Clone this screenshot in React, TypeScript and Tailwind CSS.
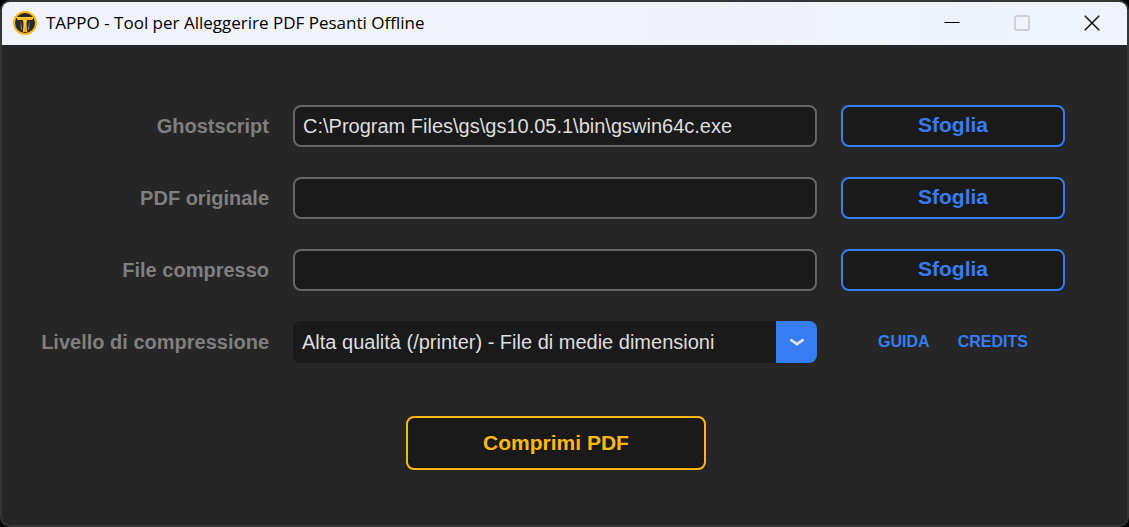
import { useState } from "react";
import type { ReactNode } from "react";

function AppIcon() {
  return (
    <svg viewBox="0 0 24 24" className="size-6 shrink-0" aria-hidden="true">
      <defs>
        <linearGradient id="gold" x1="0" y1="0" x2="0" y2="1">
          <stop offset="0" stopColor="#ffd04a" />
          <stop offset="1" stopColor="#f9ae14" />
        </linearGradient>
        <linearGradient id="steel" x1="0" y1="0" x2="0" y2="1">
          <stop offset="0" stopColor="#454545" />
          <stop offset="1" stopColor="#b4b4b4" />
        </linearGradient>
      </defs>
      <circle cx="12" cy="12" r="11" fill="#282828" stroke="#fdb515" strokeWidth="2" />
      <path d="M4 6h16v2l-1 1H5L4 8z" fill="url(#gold)" />
      <path d="M10 9h4l-.5 4 .7 8H9.800l.7-8z" fill="url(#gold)" />
      <path d="M7 10.500h1.300l.7 8.500H8.200z" fill="url(#steel)" />
      <path d="M15.700 10.500H17l-1.200 8.500H15z" fill="url(#steel)" />
    </svg>
  );
}

function TitleBar() {
  return (
    <header className="flex h-[43px] items-center bg-linear-to-r from-[#f0f3fc] via-[#f0f3f7] to-[#eef3fd] pb-px pl-[11px]">
      <AppIcon />
      <h1 className="ml-[9px] flex-1 pb-px font-['Open_Sans','Noto_Sans',sans-serif] text-[17px] leading-6 whitespace-nowrap text-black">
        TAPPO - Tool per Alleggerire PDF Pesanti Offline
      </h1>
      <div className="flex h-full">
        <button type="button" aria-label="Riduci a icona" className="flex w-[70px] items-center justify-center">
          <svg viewBox="0 0 16 16" className="size-4" stroke="#000" fill="none">
            <path d="M0.500 7.500h15" />
          </svg>
        </button>
        <button type="button" aria-label="Ingrandisci" disabled className="flex w-[70px] items-center justify-center">
          <svg viewBox="0 0 16 16" className="size-4" stroke="#c3c4c7" fill="none">
            <rect x="1" y="1" width="14" height="14" rx="1.500" strokeWidth="1.400" />
          </svg>
        </button>
        <button type="button" aria-label="Chiudi" className="flex w-[70px] items-center justify-center">
          <svg viewBox="0 0 16 16" className="size-4" stroke="#111" strokeWidth="1.500" fill="none">
            <path d="M0.800 0.800l14.400 14.400M15.200 0.800L0.800 15.200" />
          </svg>
        </button>
      </div>
    </header>
  );
}

function Label({ htmlFor, children }: { htmlFor: string; children: ReactNode }) {
  return (
    <label htmlFor={htmlFor} className="flex items-center justify-end text-xl font-bold whitespace-nowrap text-[#7f7f7f]">
      {children}
    </label>
  );
}

function FileRow({ id, label, initial = "" }: { id: string; label: string; initial?: string }) {
  const [value, setValue] = useState(initial);
  return (
    <>
      <Label htmlFor={id}>{label}</Label>
      <input
        id={id}
        type="text"
        value={value}
        onChange={(e) => setValue(e.target.value)}
        className="h-[42px] w-full min-w-0 rounded-lg border-2 border-[#656565] bg-[#1a1a1a] px-2 text-xl text-[#dedede] outline-none"
      />
      <button
        type="button"
        className="h-[42px] rounded-lg border-2 border-[#367cf2] bg-[#1a1a1a] pb-[2px] text-[21px] leading-6 font-bold text-[#367cf2]"
      >
        Sfoglia
      </button>
    </>
  );
}

const levels = [
  "Alta qualità (/printer) - File di medie dimensioni",
  "Qualità media (/ebook) - File di piccole dimensioni",
  "Qualità bassa (/screen) - File molto piccolo",
];

export default function App() {
  return (
    <div className="min-h-screen bg-black font-['Liberation_Sans',Arial,sans-serif]">
      <div className="flex min-h-screen flex-col overflow-hidden rounded-[10px] border-2 border-[#353535] bg-[#262626]">
        <TitleBar />
        <main className="flex-1 pt-[60px] pr-[62px] pb-[50px] pl-[45px]">
          <form onSubmit={(e) => e.preventDefault()}>
            <div className="grid grid-cols-[222px_1fr_224px] gap-x-6 gap-y-[30px]">
              <FileRow id="ghostscript" label="Ghostscript" initial="C:\Program Files\gs\gs10.05.1\bin\gswin64c.exe" />
              <FileRow id="originale" label="PDF originale" />
              <FileRow id="compresso" label="File compresso" />
              <Label htmlFor="livello">Livello di compressione</Label>
              <div className="relative">
                <select
                  id="livello"
                  className="h-[42px] w-full appearance-none rounded-lg bg-[#1a1a1a] pr-12 pl-[9px] text-xl text-[#dedede] outline-none"
                >
                  {levels.map((level) => (
                    <option key={level}>{level}</option>
                  ))}
                </select>
                <span className="pointer-events-none absolute inset-y-0 right-0 flex w-[41px] items-center justify-center rounded-r-lg bg-[#367cf2]">
                  <svg viewBox="0 0 16 10" className="h-[10px] w-4" fill="none" stroke="#dcdcdc" strokeWidth="2.800" strokeLinecap="round" strokeLinejoin="round">
                    <path d="M2.300 3.200L8 7.200L13.700 3.200" />
                  </svg>
                </span>
              </div>
              <nav className="flex items-center justify-center gap-7 text-base font-bold text-[#367cf2]">
                <a href="#guida">GUIDA</a>
                <a href="#credits">CREDITS</a>
              </nav>
            </div>
            <div className="mt-[53px] flex justify-center">
              <button
                type="submit"
                className="h-[54px] w-[300px] rounded-lg border-2 border-[#ffb812] bg-[#1a1a1a] text-[21px] leading-6 font-bold text-[#ffb812]"
              >
                Comprimi PDF
              </button>
            </div>
          </form>
        </main>
      </div>
    </div>
  );
}
